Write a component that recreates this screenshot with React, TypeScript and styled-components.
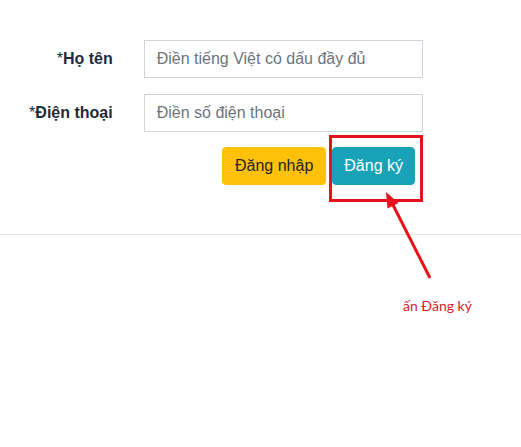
import { FC } from 'react';
import styled, { createGlobalStyle } from 'styled-components';

const GlobalStyle = createGlobalStyle`
  html, body {
    margin: 0;
    padding: 0;
    background: #fff;
  }
  body {
    font-family: "Liberation Sans", Arial, sans-serif;
    color: #212529;
  }
`;

interface ButtonProps {
  variant: 'warning' | 'info';
}

const App: FC = () => {
  return (
    <>
      <GlobalStyle />
      <Page>
        <Form>
          <Row>
            <Label><Star>*</Star>Họ tên</Label>
            <Input placeholder="Điền tiếng Việt có dấu đầy đủ" />
          </Row>
          <Row>
            <Label><Star>*</Star>Điện thoại</Label>
            <Input placeholder="Điền số điện thoại" />
          </Row>
          <Actions>
            <Button variant="warning">Đăng nhập</Button>
            <Button variant="info">Đăng ký</Button>
          </Actions>
        </Form>
        <Divider />

        <Highlight />
        <Arrow width="521" height="447" viewBox="0 0 521 447">
          <line x1="430" y1="278" x2="391" y2="201" stroke="#e8121c" strokeWidth="3" />
          <polygon points="386,192 398.5,203 387.5,208.5" fill="#e8121c" />
        </Arrow>
        <Caption>ấn Đăng ký</Caption>
      </Page>
    </>
  );
};

const Page = styled.div`
  position: relative;
  width: 521px;
  height: 447px;
  overflow: hidden;
`;

const Form = styled.form`
  display: flex;
  flex-direction: column;
  gap: 16px;
  padding-top: 40px;
  width: 423px;
`;

const Row = styled.div`
  display: flex;
  align-items: center;
  gap: 31px;
`;

const Label = styled.label`
  width: 113px;
  text-align: right;
  font-size: 16px;
  font-weight: bold;
  color: #1f2b3a;
`;

const Star = styled.span`
  font-weight: normal;
`;

const Input = styled.input`
  box-sizing: border-box;
  width: 280px;
  height: 38px;
  padding: 6px 12px;
  border: 1px solid #ced4da;
  border-radius: 0;
  font-family: "Liberation Sans", Arial, sans-serif;
  font-size: 16px;
  color: #495057;
  outline: none;

  &::placeholder {
    color: #6c757d;
  }
`;

const Actions = styled.div`
  display: flex;
  justify-content: flex-end;
  gap: 6px;
  padding-right: 8px;
  margin-top: -1px;
`;

const Button = styled.button<ButtonProps>`
  box-sizing: border-box;
  height: 38px;
  padding: 6px ${({ variant }) => (variant === 'warning' ? '12px' : '11px')};
  border-radius: 4px;
  font-family: "Liberation Sans", Arial, sans-serif;
  font-size: 16px;
  line-height: 24px;
  cursor: pointer;
  border: 1px solid ${({ variant }) => (variant === 'warning' ? '#ffc107' : '#17a2b8')};
  background: ${({ variant }) => (variant === 'warning' ? '#ffc107' : '#17a2b8')};
  color: ${({ variant }) => (variant === 'warning' ? '#212529' : '#fff')};
`;

const Divider = styled.hr`
  margin: 49px 0 0;
  border: 0;
  border-top: 1px solid #dee2e6;
`;

const Highlight = styled.div`
  position: absolute;
  left: 329px;
  top: 135px;
  width: 94px;
  height: 67px;
  box-sizing: border-box;
  border: 3px solid #e8121c;
  pointer-events: none;
`;

const Arrow = styled.svg`
  position: absolute;
  left: 0;
  top: 0;
  pointer-events: none;
`;

const Caption = styled.div`
  position: absolute;
  left: 403px;
  top: 297px;
  font-family: Lato, "Noto Sans", sans-serif;
  font-size: 14px;
  line-height: 18px;
  color: #d9202c;
`;

export default App;
